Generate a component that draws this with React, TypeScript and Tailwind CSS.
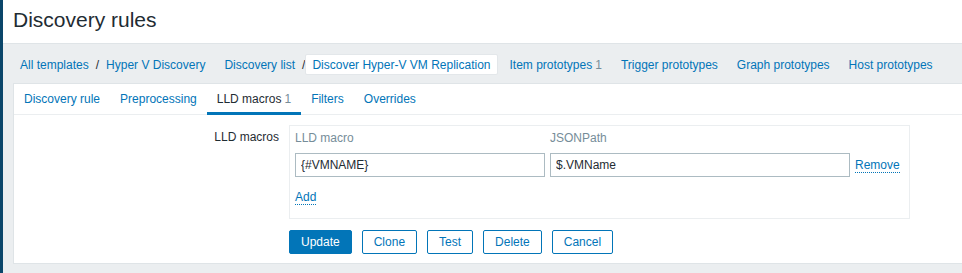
const link = 'text-[#0275b8]';

function Counter({ n }: { n: number }) {
  return <span className="ml-[3px] text-[#768d99]">{n}</span>;
}

const navItems = [
  { label: 'Item prototypes', count: 1 },
  { label: 'Trigger prototypes' },
  { label: 'Graph prototypes' },
  { label: 'Host prototypes' }
];

const tabs = [
  { label: 'Discovery rule' },
  { label: 'Preprocessing' },
  { label: 'LLD macros', count: 1, active: true },
  { label: 'Filters' },
  { label: 'Overrides' }
];

const buttons = ['Clone', 'Test', 'Delete', 'Cancel'];

export default function App() {
  return (
    <div className="flex min-h-screen font-['Liberation_Sans',Arial,sans-serif] text-[12px] leading-[14px] text-[#1f2c33]">
      <div className="w-[3px] shrink-0 bg-[#0a466a]" />
      <main className="min-w-0 flex-1 bg-[#ebeef0]">
        <header className="h-[44px] border-b border-[#dfe4e7] bg-white pl-[10px] pt-[8px]">
          <h1 className="text-[21px] font-normal leading-[24px]">Discovery rules</h1>
        </header>

        <nav className="flex items-center gap-[5px] whitespace-nowrap pb-[8px] pl-[10px] pt-[10px]">
          <div className="flex h-[21px] items-center">
            <a className={`px-[7px] ${link}`}>All templates</a>
            <span>/</span>
            <a className={`px-[7px] ${link}`}>Hyper V Discovery</a>
          </div>
          <div className="flex h-[21px] items-center">
            <a className={`px-[7px] ${link}`}>Discovery list</a>
            <span>/</span>
            <a className={`flex h-[21px] items-center rounded-[2px] border border-[#e3e7ea] bg-white px-[6px] ${link}`}>
              Discover Hyper-V VM Replication
            </a>
          </div>
          {navItems.map((item) => (
            <a key={item.label} className={`flex h-[21px] items-center px-[7px] ${link}`}>
              {item.label}
              {item.count && <Counter n={item.count} />}
            </a>
          ))}
        </nav>

        <div className="ml-[10px] border border-r-0 border-[#dfe4e7] bg-white pb-[9px]">
          <ul className="flex border-b border-[#ebeef0] whitespace-nowrap">
            {tabs.map((tab) => (
              <li
                key={tab.label}
                className={`-mb-px h-[31px] border-b-[3px] px-[10px] pt-[8px] ${
                  tab.active ? 'border-[#0275b8] text-[#1f2c33]' : 'border-transparent text-[#0275b8]'
                }`}
              >
                {tab.label}
                {tab.count && <Counter n={tab.count} />}
              </li>
            ))}
          </ul>

          <div className="flex pt-[10px]">
            <label className="w-[265px] shrink-0 pt-[5px] text-right">LLD macros</label>
            <div className="ml-[10px] w-[621px] shrink-0 border border-[#ebeef0] p-[5px]">
              <div className="flex h-[22px] gap-[5px] text-[#768d99]">
                <div className="w-[250px]">LLD macro</div>
                <div className="w-[300px]">JSONPath</div>
              </div>
              <div className="flex items-center gap-[5px]">
                <input
                  className="h-[24px] w-[250px] border border-[#acbbc2] bg-white px-[5px] text-[#1f2c33] outline-none"
                  defaultValue="{#VMNAME}"
                />
                <input
                  className="h-[24px] w-[300px] border border-[#acbbc2] bg-white px-[5px] text-[#1f2c33] outline-none"
                  defaultValue="$.VMName"
                />
                <a className={`inline-block border-b border-dotted border-[#0275b8] ${link}`}>Remove</a>
              </div>
              <div className="mb-[8px] mt-[13px]">
                <a className={`inline-block border-b border-dotted border-[#0275b8] ${link}`}>Add</a>
              </div>
            </div>
          </div>

          <div className="ml-[275px] mt-[11px] flex gap-[10px]">
            <button className="h-[24px] rounded-[2px] border border-[#0275b8] bg-[#0275b8] px-[11px] text-white">
              Update
            </button>
            {buttons.map((b) => (
              <button
                key={b}
                className="h-[24px] rounded-[2px] border border-[#0275b8] bg-white px-[11px] text-[#0275b8]"
              >
                {b}
              </button>
            ))}
          </div>
        </div>
      </main>
    </div>
  );
}
